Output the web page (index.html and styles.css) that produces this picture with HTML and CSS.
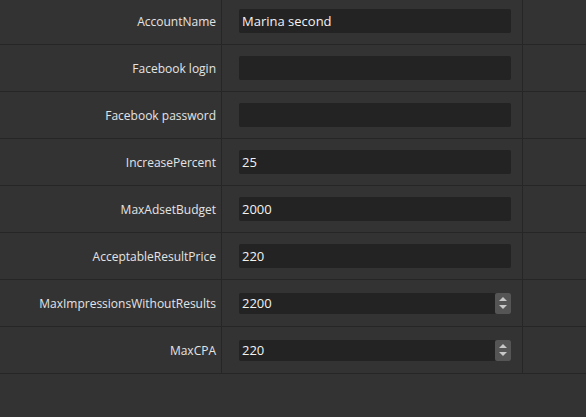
FILE: index.html
```html
<!DOCTYPE html>
<html>
<head>
  <title>Account settings</title>
  <link rel="stylesheet" href="styles.css">
</head>
<body>
  <div class="form">
    <div class="row">
      <label class="name">AccountName</label>
      <div class="field"><input class="text" value="Marina second"></div>
      <div class="rest"></div>
    </div>
    <div class="row">
      <label class="name">Facebook login</label>
      <div class="field"><input class="text" value=""></div>
      <div class="rest"></div>
    </div>
    <div class="row">
      <label class="name">Facebook password</label>
      <div class="field"><input class="text" value=""></div>
      <div class="rest"></div>
    </div>
    <div class="row">
      <label class="name">IncreasePercent</label>
      <div class="field"><input class="text" value="25"></div>
      <div class="rest"></div>
    </div>
    <div class="row">
      <label class="name">MaxAdsetBudget</label>
      <div class="field"><input class="text" value="2000"></div>
      <div class="rest"></div>
    </div>
    <div class="row">
      <label class="name">AcceptableResultPrice</label>
      <div class="field"><input class="text" value="220"></div>
      <div class="rest"></div>
    </div>
    <div class="row">
      <label class="name">MaxImpressionsWithoutResults</label>
      <div class="field">
        <div class="number"><input value="2200"><span class="spin"><i class="up"></i><i class="down"></i></span></div>
      </div>
      <div class="rest"></div>
    </div>
    <div class="row">
      <label class="name">MaxCPA</label>
      <div class="field">
        <div class="number"><input value="220"><span class="spin"><i class="up"></i><i class="down"></i></span></div>
      </div>
      <div class="rest"></div>
    </div>
  </div>
</body>
</html>
```

FILE: styles.css
```css
html, body { background: #333333; }
body { margin: 0; font-family: "Open Sans", "DejaVu Sans", sans-serif; color: #e6e6e6; }
.form { margin-top: -2px; }
.row { display: grid; grid-template-columns: 222px 301px 1fr; height: 47px; border-bottom: 1px solid #262626; box-sizing: border-box; }
.name { border-right: 1px solid #262626; display: flex; align-items: center; justify-content: flex-end; padding-right: 5px; font-size: 12px; color: #e4e4e4; }
.field { border-right: 1px solid #262626; display: flex; align-items: center; padding-left: 17px; }
input { font-family: inherit; font-size: 13px; color: #f2f2f2; background: #232323; border: none; outline: none; }
.text { width: 272px; height: 24px; padding: 0 3px; box-sizing: border-box; border-radius: 2px; }
.number { display: flex; width: 272px; height: 21px; background: #232323; border-radius: 2px; }
.number input { flex: 1; min-width: 0; height: 21px; padding: 0 3px; background: transparent; }
.spin { width: 16px; background: #555555; border-radius: 2px; display: flex; flex-direction: column; align-items: center; justify-content: center; gap: 4px; }
.spin i { width: 0; height: 0; border-left: 4px solid transparent; border-right: 4px solid transparent; }
.up { border-bottom: 4px solid #c8c8c8; }
.down { border-top: 4px solid #c8c8c8; }
```
